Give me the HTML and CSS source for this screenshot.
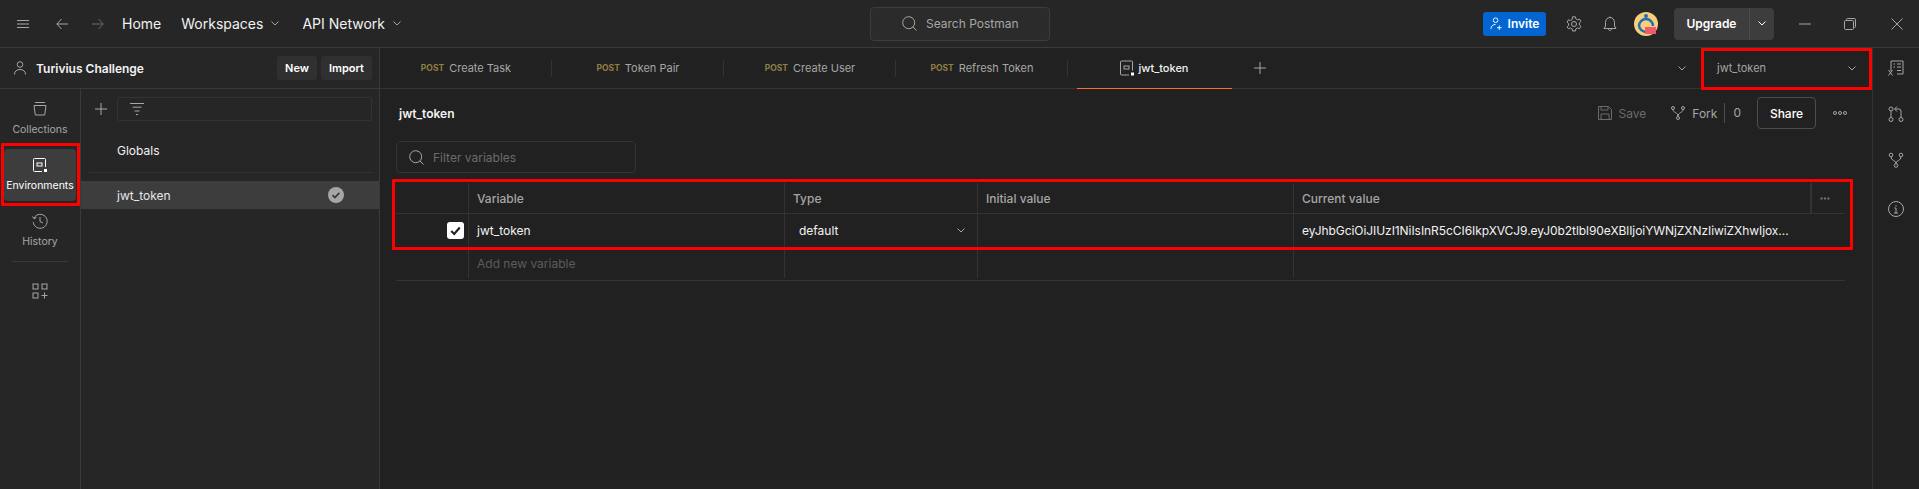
FILE: index.html
```html
<!DOCTYPE html>
<html lang="en">
<head>
    <meta charset="UTF-8">
    <title>Postman</title>
    <link rel="stylesheet" href="styles.css">
</head>
<body>
<div class="app">
    <header class="topbar">
        <svg class="icon menu-icon" viewBox="0 0 12 8"><path d="M0 .5h12M0 4h12M0 7.5h12"/></svg>
        <svg class="icon back-icon" viewBox="0 0 12 12"><path d="M12 6H.8M5.5 1 .8 6l4.7 5"/></svg>
        <svg class="icon fwd-icon" viewBox="0 0 12 12"><path d="M0 6h11.2M6.5 1l4.7 5-4.7 5"/></svg>
        <a class="top-link home-link">Home</a>
        <a class="top-link ws-link">Workspaces <svg class="chev" viewBox="0 0 8 5"><path d="M.5.5 4 4 7.500.5"/></svg></a>
        <a class="top-link api-link">API Network <svg class="chev" viewBox="0 0 8 5"><path d="M.5.5 4 4 7.500.5"/></svg></a>

        <div class="search-box">
            <svg class="icon search-icon" viewBox="0 0 15 15"><circle cx="6.700" cy="6.700" r="6"/><path d="m11 11 3.500 3.500"/></svg>
            Search Postman
        </div>

        <div class="top-right">
            <button class="invite-btn">
                <svg viewBox="0 0 14 14"><circle cx="6" cy="3.500" r="2.500"/><path d="M1 13c0-3 2-5 5-5M10 9v5M7.500 11.500h5"/></svg>
                Invite
            </button>
            <svg class="icon gear-icon" viewBox="0 0 16 16"><circle cx="8" cy="8" r="2.500"/><path d="M6.600.8h2.800l.4 2 1.700 1 2-.7 1.400 2.400-1.500 1.400v2l1.500 1.400-1.400 2.400-2-.7-1.700 1-.4 2H6.600l-.4-2-1.700-1-2 .7L1.100 11l1.500-1.400v-2L1.100 6.200l1.400-2.400 2 .7 1.700-1z"/></svg>
            <svg class="icon bell-icon" viewBox="0 0 14 16"><path d="M1 12.500h12l-1.500-2.500V6.500C11.500 3.500 9.500 1.500 7 1.500S2.500 3.500 2.500 6.500V10zM5.500 13c0 2 3 2 3 0M7 .5v1"/></svg>
            <svg class="avatar" viewBox="0 0 24 24">
                <circle cx="12" cy="12" r="12" fill="#f7cf7a"/>
                <path d="M5 14a7 7 0 1 1 14 0" fill="none" stroke="#1f6fb5" stroke-width="2.500"/>
                <circle cx="12" cy="4" r="2" fill="#1f6fb5"/>
                <path d="M5 14c1 4 4 6 8 6" fill="none" stroke="#1f6fb5" stroke-width="2.500"/>
                <rect x="11" y="15" width="11" height="7" fill="#ef5a6f"/>
            </svg>
            <div class="upgrade-btn">
                <span class="upgrade-text">Upgrade</span>
                <span class="upgrade-arrow"><svg class="chev" viewBox="0 0 8 5"><path d="M.5.5 4 4 7.500.5"/></svg></span>
            </div>
            <svg class="icon win-min" viewBox="0 0 12 12"><path d="M0 6h12"/></svg>
            <svg class="icon win-max" viewBox="0 0 12 12"><rect x=".5" y="2.500" width="9" height="9" rx="1"/><path d="M2.500 2.500V1.500a1 1 0 0 1 1-1h7a1 1 0 0 1 1 1v7a1 1 0 0 1-1 1h-1"/></svg>
            <svg class="icon win-close" viewBox="0 0 12 12"><path d="m.5.5 11 11M11.500.5l-11 11"/></svg>
        </div>
    </header>

    <div class="workspace">
        <aside class="side">
            <div class="side-head">
                <svg class="icon user-icon" viewBox="0 0 12 14"><circle cx="6" cy="3.500" r="2.800"/><path d="M.5 13.500c0-3 2-5 5.500-5s5.500 2 5.500 5"/></svg>
                <span class="ws-name">Turivius Challenge</span>
                <button class="small-btn">New</button>
                <button class="small-btn">Import</button>
            </div>
            <div class="side-body">
                <nav class="side-nav">
                    <div class="nav-item">
                        <svg class="icon" viewBox="0 0 16 16"><path d="M2 4.500h12l-1.300 9.500H3.300zM3 1.500h10"/></svg>
                        <span>Collections</span>
                    </div>
                    <div class="nav-item nav-active">
                        <svg class="icon" viewBox="0 0 16 16"><path d="M13.500 10V2.500a1 1 0 0 0-1-1h-10a1 1 0 0 0-1 1v11a1 1 0 0 0 1 1H10"/><rect x="5" y="6" width="5" height="3"/><rect class="solid" x="12" y="12" width="3" height="3"/></svg>
                        <span>Environments</span>
                    </div>
                    <div class="nav-item">
                        <svg class="icon" viewBox="0 0 16 16"><path d="M2 5a7 7 0 1 1-.8 4M.5 3.500 2 5.800l2.500-1.300M8 4v4.500l3 1.500"/></svg>
                        <span>History</span>
                    </div>
                    <div class="nav-sep"></div>
                    <svg class="icon apps-icon" viewBox="0 0 16 16"><rect x="1" y="1" width="5" height="5"/><rect x="10" y="1" width="5" height="5"/><rect x="1" y="10" width="5" height="5"/><path d="M12.500 9.500v6M9.500 12.500h6"/></svg>
                </nav>
                <div class="env-list">
                    <div class="env-tools">
                        <svg class="icon plus-icon" viewBox="0 0 12 12"><path d="M6 0v12M0 6h12"/></svg>
                        <div class="env-filter">
                            <svg class="icon" viewBox="0 0 14 12"><path d="M0 .5h14M2.500 4.200h9M4.500 8h5M6 11.500h2"/></svg>
                        </div>
                    </div>
                    <div class="env-globals">Globals</div>
                    <div class="env-row">
                        <span>jwt_token</span>
                        <svg class="env-check" viewBox="0 0 16 16"><circle cx="8" cy="8" r="8" fill="#a6a6a6"/><path d="m4.500 8.200 2.400 2.300 4.500-4.700" fill="none" stroke="#3a3a3a" stroke-width="1.800"/></svg>
                    </div>
                </div>
            </div>
        </aside>

        <main class="main">
            <div class="tabs">
                <div class="tab"><b>POST</b> Create Task</div>
                <div class="tab"><b>POST</b> Token Pair</div>
                <div class="tab"><b>POST</b> Create User</div>
                <div class="tab"><b>POST</b> Refresh Token</div>
                <div class="tab tab-active">
                    <svg class="icon" viewBox="0 0 14 16"><path d="M12.500 10.500V2a1 1 0 0 0-1-1h-10a1 1 0 0 0-1 1v12a1 1 0 0 0 1 1H9"/><rect x="4" y="6" width="5" height="3"/><rect class="solid" x="11" y="12.500" width="3" height="3"/></svg>
                    jwt_token
                </div>
                <svg class="icon tab-plus" viewBox="0 0 12 12"><path d="M6 0v12M0 6h12"/></svg>
                <svg class="chev tabs-more" viewBox="0 0 8 5"><path d="M.5.5 4 4 7.500.5"/></svg>
                <div class="env-select">
                    jwt_token
                    <svg class="chev" viewBox="0 0 8 5"><path d="M.5.5 4 4 7.500.5"/></svg>
                </div>
            </div>

            <div class="toolbar">
                <h1 class="env-title">jwt_token</h1>
                <div class="tool save-tool">
                    <svg class="icon" viewBox="0 0 14 14"><path d="M.5.5h10l3 3v10H.5zM3 .5V4h7V.5M3 13.500V8h8v5.500"/></svg>
                    Save
                </div>
                <div class="tool fork-tool">
                    <svg class="icon" viewBox="0 0 14 14"><circle cx="2" cy="2" r="1.500"/><circle cx="12" cy="2" r="1.500"/><circle cx="7" cy="12" r="1.500"/><path d="M2 3.500C2 7 7 6 7 10.500M12 3.500C12 7 7 6 7 10.500"/></svg>
                    Fork
                    <span class="fork-count">0</span>
                </div>
                <button class="share-btn">Share</button>
                <svg class="more-dots" viewBox="0 0 14 4"><circle cx="2" cy="2" r="1.500"/><circle cx="7" cy="2" r="1.500"/><circle cx="12" cy="2" r="1.500"/></svg>
            </div>

            <div class="filter-box">
                <svg class="icon search-icon" viewBox="0 0 15 15"><circle cx="6.700" cy="6.700" r="6"/><path d="m11 11 3.500 3.500"/></svg>
                Filter variables
            </div>

            <div class="var-table">
                <div class="var-row var-head">
                    <div class="cell"></div>
                    <div class="cell">Variable</div>
                    <div class="cell">Type</div>
                    <div class="cell">Initial value</div>
                    <div class="cell">Current value</div>
                    <div class="cell cell-more"><svg viewBox="0 0 10 3"><circle cx="1.500" cy="1.500" r="1.200"/><circle cx="5" cy="1.500" r="1.200"/><circle cx="8.500" cy="1.500" r="1.200"/></svg></div>
                </div>
                <div class="var-row var-body">
                    <div class="cell cell-check">
                        <span class="checkbox"><svg viewBox="0 0 16 16"><path d="m4 8.500 2.800 2.700L12 5.200"/></svg></span>
                    </div>
                    <div class="cell">jwt_token</div>
                    <div class="cell cell-type">default <svg class="chev" viewBox="0 0 8 5"><path d="M.5.5 4 4 7.500.5"/></svg></div>
                    <div class="cell"></div>
                    <div class="cell cell-value cell-last">eyJhbGciOiJIUzI1NiIsInR5cCI6IkpXVCJ9.eyJ0b2tlbl90eXBlIjoiYWNjZXNzIiwiZXhwIjox...</div>
                    <div class="cell cell-blank"></div>
                </div>
                <div class="var-row var-new">
                    <div class="cell"></div>
                    <div class="cell">Add new variable</div>
                    <div class="cell"></div>
                    <div class="cell"></div>
                    <div class="cell cell-last"></div>
                    <div class="cell cell-blank"></div>
                </div>
            </div>
        </main>

        <aside class="right-bar">
            <svg class="icon" viewBox="0 0 16 16"><path d="M3 11V1h12v13H9M5.500 4H7M9 4h4M5.500 7H7M9 7h4M9 10.500h4M.5 10l4 5.500M4.500 10l-4 5.500"/></svg>
            <svg class="icon" viewBox="0 0 16 16"><circle cx="3" cy="3" r="2"/><circle cx="3" cy="13.500" r="2"/><circle cx="13" cy="13.500" r="2"/><path d="M3 5v6.500M13 11.500V5a2 2 0 0 0-2-2H7M9 .5 6.500 3 9 5.500"/></svg>
            <svg class="icon" viewBox="0 0 16 16"><circle cx="3" cy="3" r="1.800"/><circle cx="13" cy="3" r="1.800"/><circle cx="8" cy="13.500" r="1.800"/><path d="M3 5c0 4 5 3 5 6.500M13 5c0 4-5 3-5 6.500"/></svg>
            <svg class="icon info-icon" viewBox="0 0 16 16"><circle cx="8" cy="8" r="7.500"/><path d="M6.500 7H8v5M6 12h4M8 4v1.500"/></svg>
        </aside>
    </div>

    <!-- red annotation boxes -->
    <div class="mark mark-nav"></div>
    <div class="mark mark-env"></div>
    <div class="mark mark-row"></div>
</div>
</body>
</html>
```

FILE: styles.css
```css
* {
    margin: 0;
    padding: 0;
    box-sizing: border-box;
}
body {
    font-family: Inter, "Liberation Sans", sans-serif;
    font-size: 12px;
    background-color: #212121;
    color: #fff;
    overflow: hidden;
}
button {
    font-family: inherit;
    border: none;
    color: #fff;
}
.app {
    position: relative;
    width: 1919px;
    height: 489px;
    display: flex;
    flex-direction: column;
}
.icon {
    width: 16px;
    height: 16px;
    flex: none;
    fill: none;
    stroke: #a6a6a6;
    stroke-width: 1;
}
.icon .solid {
    fill: #fff;
    stroke: none;
}
.chev {
    width: 8px;
    height: 5px;
    flex: none;
    fill: none;
    stroke: #a6a6a6;
    stroke-width: 1;
}

/* top bar */
.topbar {
    height: 48px;
    flex: none;
    display: flex;
    align-items: center;
    background-color: #262626;
    border-bottom: 1px solid #3a3a3a;
}
.menu-icon {
    width: 12px;
    height: 8px;
    margin-left: 17px;
}
.back-icon, .fwd-icon {
    width: 12px;
    height: 12px;
}
.back-icon { margin-left: 27px; }
.fwd-icon {
    margin-left: 24px;
    stroke: #6b6b6b;
}
.top-link {
    font-size: 14px;
    color: #f2f2f2;
    display: flex;
    align-items: center;
    gap: 8px;
}
.home-link { margin-left: 18px; }
.ws-link { margin-left: 20px; }
.api-link { margin-left: 23px; }
.search-box {
    width: 180px;
    height: 34px;
    margin-left: 469px;
    padding-left: 31px;
    display: flex;
    align-items: center;
    gap: 9px;
    font-size: 12px;
    color: #a6a6a6;
    background-color: #2b2b2b;
    border: 1px solid #3d3d3d;
    border-radius: 4px;
}
.search-icon {
    width: 15px;
    height: 15px;
}
.top-right {
    margin-left: auto;
    display: flex;
    align-items: center;
}
.invite-btn {
    width: 63px;
    height: 24px;
    display: flex;
    align-items: center;
    justify-content: center;
    gap: 5px;
    font-size: 12px;
    font-weight: 600;
    background-color: #0265d2;
    border-radius: 3px;
}
.invite-btn svg {
    width: 13px;
    height: 13px;
    fill: none;
    stroke: #fff;
}
.gear-icon { margin-left: 20px; }
.bell-icon {
    width: 14px;
    margin-left: 21px;
}
.avatar {
    width: 24px;
    height: 24px;
    margin-left: 17px;
}
.upgrade-btn {
    width: 100px;
    height: 32px;
    margin-left: 16px;
    display: flex;
    align-items: center;
    background-color: #3d3d3d;
    border-radius: 4px;
}
.upgrade-text {
    width: 75px;
    text-align: center;
    font-weight: 600;
    font-size: 12px;
}
.upgrade-arrow {
    flex: 1;
    height: 100%;
    display: flex;
    align-items: center;
    justify-content: center;
    border-left: 1px solid #4d4d4d;
}
.upgrade-arrow .chev { stroke: #fff; }
.win-min, .win-max, .win-close {
    width: 12px;
    height: 12px;
}
.win-min { margin-left: 25px; }
.win-max { margin-left: 33px; }
.win-close {
    margin-left: 35px;
    margin-right: 16px;
}

.workspace {
    flex: 1;
    display: flex;
    min-height: 0;
}

/* left side */
.side {
    width: 380px;
    flex: none;
    display: flex;
    flex-direction: column;
    background-color: #262626;
    border-right: 1px solid #3a3a3a;
}
.side-head {
    height: 41px;
    flex: none;
    display: flex;
    align-items: center;
    padding: 0 7px 0 14px;
    border-bottom: 1px solid #3a3a3a;
}
.user-icon {
    width: 12px;
    height: 14px;
}
.ws-name {
    margin-left: 10px;
    margin-right: auto;
    font-weight: 600;
    color: #f2f2f2;
}
.small-btn {
    height: 24px;
    padding: 0 8px;
    margin-left: 4px;
    font-size: 11px;
    font-weight: 600;
    background-color: #303030;
    border-radius: 3px;
}
.side-body {
    flex: 1;
    display: flex;
}
.side-nav {
    width: 81px;
    flex: none;
    padding-top: 4px;
    display: flex;
    flex-direction: column;
    align-items: center;
    border-right: 1px solid #3a3a3a;
}
.nav-item {
    width: 72px;
    height: 52px;
    margin-bottom: 4px;
    padding-top: 8px;
    display: flex;
    flex-direction: column;
    align-items: center;
    gap: 6px;
    font-size: 10.5px;
    color: #a6a6a6;
    border-radius: 4px;
}
.nav-active {
    background-color: #3d3d3d;
    color: #fff;
}
.nav-active .icon { stroke: #fff; }
.nav-sep {
    width: 56px;
    border-top: 1px solid #3a3a3a;
}
.apps-icon { margin-top: 21px; }
.env-list {
    flex: 1;
    padding-top: 8px;
}
.env-tools {
    display: flex;
    align-items: center;
    height: 24px;
    padding: 0 7px 0 14px;
}
.plus-icon {
    width: 12px;
    height: 12px;
}
.env-filter {
    flex: 1;
    height: 24px;
    margin-left: 10px;
    padding-left: 12px;
    display: flex;
    align-items: center;
    border: 1px solid #333;
    border-radius: 2px;
}
.env-filter .icon {
    width: 14px;
    height: 12px;
}
.env-globals {
    height: 44px;
    margin: 8px 7px 8px 8px;
    padding-left: 28px;
    display: flex;
    align-items: center;
    color: #f2f2f2;
    border-bottom: 1px solid #333;
}
.env-row {
    height: 28px;
    padding: 0 35px 0 36px;
    display: flex;
    align-items: center;
    justify-content: space-between;
    color: #e6e6e6;
    background-color: #3d3d3d;
}
.env-check {
    width: 16px;
    height: 16px;
}

/* main area */
.main {
    flex: 1;
    min-width: 0;
}
.tabs {
    height: 41px;
    display: flex;
    align-items: center;
    border-bottom: 1px solid #333;
    font-size: 11px;
    color: #a6a6a6;
}
.tab {
    position: relative;
    width: 172px;
    height: 40px;
    display: flex;
    align-items: center;
    justify-content: center;
    gap: 5px;
}
.tab::before {
    content: "";
    position: absolute;
    right: 0;
    top: 12px;
    height: 17px;
    border-right: 1px solid #333;
}
.tab b {
    font-size: 8.5px;
    font-weight: 700;
    color: #8f7f45;
}
.tab-active {
    color: #f2f2f2;
    font-weight: 500;
}
.tab-active::before { display: none; }
.tab-active::after {
    content: "";
    position: absolute;
    left: 9px;
    right: 8px;
    bottom: -1px;
    border-bottom: 1px solid #ff6c37;
}
.tab-active .icon {
    width: 14px;
    height: 16px;
}
.tab-plus {
    width: 12px;
    height: 12px;
    margin-left: 14px;
}
.tabs-more {
    margin-left: auto;
    margin-right: 15px;
}
.env-select {
    width: 171px;
    height: 40px;
    padding: 0 16px 0 16px;
    display: flex;
    align-items: center;
    justify-content: space-between;
}
.toolbar {
    height: 32px;
    margin-top: 8px;
    padding: 0 25px 0 19px;
    display: flex;
    align-items: center;
    color: #a6a6a6;
}
.env-title {
    font-size: 12px;
    font-weight: 600;
    color: #f2f2f2;
    margin-right: auto;
}
.tool {
    display: flex;
    align-items: center;
}
.tool .icon {
    width: 14px;
    height: 14px;
    margin-right: 7px;
}
.save-tool { color: #6b6b6b; }
.save-tool .icon { stroke: #6b6b6b; }
.fork-tool { margin-left: 25px; }
.fork-count {
    margin-left: 7px;
    padding-left: 8px;
    line-height: 20px;
    border-left: 1px solid #4d4d4d;
}
.share-btn {
    width: 59px;
    height: 32px;
    margin-left: 16px;
    font-size: 12px;
    font-weight: 500;
    background: none;
    border: 1px solid #4d4d4d;
    border-radius: 4px;
}
.more-dots {
    width: 14px;
    height: 4px;
    margin-left: 17px;
    fill: none;
    stroke: #a6a6a6;
}
.filter-box {
    width: 240px;
    height: 32px;
    margin: 12px 0 10px 16px;
    padding-left: 12px;
    display: flex;
    align-items: center;
    gap: 9px;
    color: #6b6b6b;
    border: 1px solid #333;
    border-radius: 4px;
}
.var-table {
    width: 1449px;
    margin-left: 16px;
}
.var-row {
    display: grid;
    grid-template-columns: 73px 316px 193px 316px 517px 34px;
    border-bottom: 1px solid #333;
}
.cell {
    display: flex;
    align-items: center;
    padding: 0 8px;
    border-right: 1px solid #333;
}
.cell-more, .cell-blank, .cell-last { border-right: none; }
.var-head {
    height: 31px;
    font-weight: 500;
    color: #a6a6a6;
}
.cell-more {
    justify-content: flex-start;
    padding: 0 0 0 8px;
    border-left: 1px solid #333;
}
.cell-more svg {
    width: 10px;
    height: 3px;
    fill: #6b6b6b;
}
.var-body {
    height: 34px;
    color: #f2f2f2;
}
.cell-check {
    justify-content: flex-end;
    padding-right: 4px;
}
.checkbox {
    width: 17px;
    height: 17px;
    background-color: #fff;
    border-radius: 3px;
}
.checkbox svg {
    display: block;
    fill: none;
    stroke: #212121;
    stroke-width: 2;
}
.cell-type {
    justify-content: space-between;
    padding: 0 12px 0 14px;
}
.cell-value {
    white-space: nowrap;
    overflow: hidden;
    letter-spacing: -0.06px;
}
.var-new {
    height: 33px;
    padding-bottom: 2px;
    color: #5c5c5c;
}

/* right icon bar */
.right-bar {
    width: 47px;
    flex: none;
    display: flex;
    flex-direction: column;
    align-items: center;
    padding-top: 12px;
    gap: 30px;
    border-left: 1px solid #333;
}
.info-icon { margin-top: 3px; }

/* red annotation boxes drawn over the screenshot */
.mark {
    position: absolute;
    border: 3px solid #f00;
    border-radius: 1px;
}
.mark-nav {
    left: 1px;
    top: 143px;
    width: 79px;
    height: 63px;
}
.mark-env {
    left: 1701px;
    top: 48px;
    width: 171px;
    height: 42px;
}
.mark-row {
    left: 392px;
    top: 179px;
    width: 1461px;
    height: 71px;
}
```
